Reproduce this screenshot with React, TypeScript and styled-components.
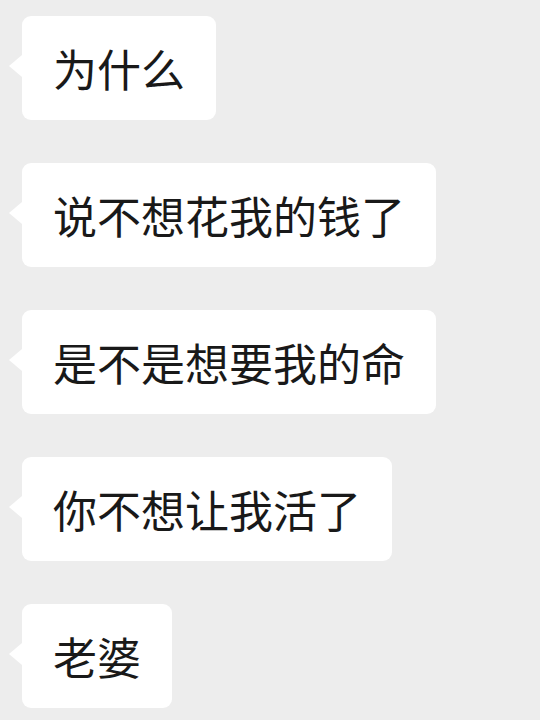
import React from 'react';
import styled, { createGlobalStyle } from 'styled-components';

const GlobalStyle = createGlobalStyle`
  html, body {
    margin: 0;
    padding: 0;
    background: #ededed;
  }
  body {
    font-family: 'Noto Sans CJK SC', 'Noto Sans', sans-serif;
    color: #191919;
  }
`;

const Thread = styled.div`
  display: flex;
  flex-direction: column;
  align-items: flex-start;
  gap: 43px;
  padding: 16px 0 0 22px;
  min-height: 720px;
  box-sizing: border-box;
`;

const Bubble = styled.div`
  position: relative;
  background: #ffffff;
  border-radius: 9px;
  padding: 30px 31px 30px 31px;
  font-size: 44px;
  line-height: 44px;
  white-space: nowrap;

  /* little arrow pointing to the sender */
  &::before {
    content: '';
    position: absolute;
    left: -13px;
    top: 39px;
    width: 0;
    height: 0;
    border-top: 11px solid transparent;
    border-bottom: 11px solid transparent;
    border-right: 13px solid #ffffff;
  }
`;

const messages = ['为什么', '说不想花我的钱了', '是不是想要我的命', '你不想让我活了', '老婆'];

const App: React.FC = () => (
  <>
    <GlobalStyle />
    <Thread>
      {messages.map((text) => (
        <Bubble key={text}>{text}</Bubble>
      ))}
    </Thread>
  </>
);

export default App;
